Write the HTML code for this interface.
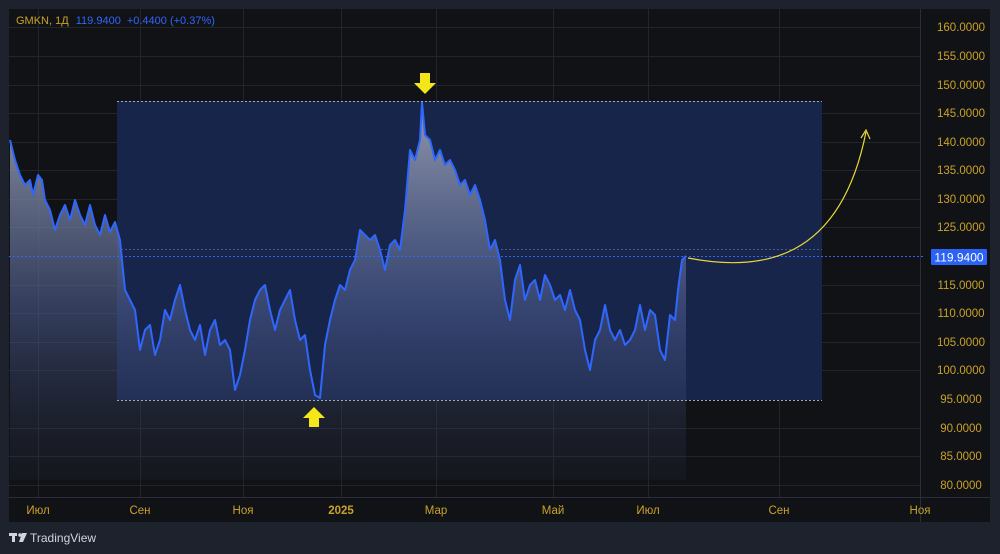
<!DOCTYPE html><html><head><meta charset="utf-8"><style>
body{margin:0;width:1000px;height:554px;background:#1e222d;overflow:hidden;font-family:"Liberation Sans",sans-serif}
</style></head><body>
<svg width="1000" height="554" style="position:absolute;left:0;top:0">
<defs>
<linearGradient id="g" x1="0" y1="0" x2="0" y2="1"><stop offset="0" stop-color="#a0a6b8" stop-opacity="0.9"/><stop offset="0.55" stop-color="#4a5a8a" stop-opacity="0.6"/><stop offset="1" stop-color="#2a3250" stop-opacity="0.15"/></linearGradient>
</defs>
<rect x="9" y="9" width="981" height="513" fill="#111215"/>
<g stroke="#22252c" stroke-width="1">
<line x1="9" x2="920" y1="27.5" y2="27.5"/><line x1="9" x2="920" y1="56.5" y2="56.5"/><line x1="9" x2="920" y1="85.5" y2="85.5"/><line x1="9" x2="920" y1="113.5" y2="113.5"/><line x1="9" x2="920" y1="142.5" y2="142.5"/><line x1="9" x2="920" y1="170.5" y2="170.5"/><line x1="9" x2="920" y1="199.5" y2="199.5"/><line x1="9" x2="920" y1="227.5" y2="227.5"/><line x1="9" x2="920" y1="285.5" y2="285.5"/><line x1="9" x2="920" y1="313.5" y2="313.5"/><line x1="9" x2="920" y1="342.5" y2="342.5"/><line x1="9" x2="920" y1="370.5" y2="370.5"/><line x1="9" x2="920" y1="428.5" y2="428.5"/><line x1="9" x2="920" y1="456.5" y2="456.5"/><line x1="9" x2="920" y1="485.5" y2="485.5"/>
<line y1="9" y2="497" x1="38.5" x2="38.5"/><line y1="9" y2="497" x1="140.5" x2="140.5"/><line y1="9" y2="497" x1="243.5" x2="243.5"/><line y1="9" y2="497" x1="341.5" x2="341.5"/><line y1="9" y2="497" x1="436.5" x2="436.5"/><line y1="9" y2="497" x1="553.5" x2="553.5"/><line y1="9" y2="497" x1="648.5" x2="648.5"/><line y1="9" y2="497" x1="779.5" x2="779.5"/>
</g>
<line x1="9" x2="990" y1="497.5" y2="497.5" stroke="#2a2e39"/>
<line x1="920.5" x2="920.5" y1="9" y2="522" stroke="#2a2e39"/>
<rect x="117" y="101" width="705" height="299" fill="#18254b"/>
<path fill="url(#g)" d="M10,140 L15,160 20,175 25,185 30,180 33,195 38,175 42,180 45,200 50,210 55,230 60,215 65,205 70,220 75,200 80,215 85,225 90,205 95,225 100,235 105,215 110,232 115,222 120,240 125,290 130,300 135,310 140,350 145,330 150,325 155,355 160,340 165,310 170,320 175,300 180,285 185,310 190,330 195,340 200,325 205,355 210,330 215,320 220,345 225,340 230,350 235,390 240,375 245,350 250,320 255,300 260,290 265,285 270,310 275,330 280,310 285,300 290,290 295,320 300,340 305,335 310,370 315,395 320,398 325,345 330,320 335,300 340,285 345,290 350,270 355,260 360,230 365,235 370,240 375,235 380,250 385,270 390,245 395,240 400,250 405,210 410,150 415,160 420,140 422,102 425,135 430,140 435,160 440,150 445,165 450,160 455,170 460,185 465,180 470,195 475,185 480,200 485,220 490,250 495,240 500,260 505,300 510,320 515,280 520,265 525,300 530,285 535,280 540,300 545,275 550,285 555,300 560,295 565,310 570,290 575,310 580,320 585,350 590,370 595,340 600,330 605,305 610,330 615,340 620,330 625,345 630,340 635,330 640,305 645,330 650,310 655,315 660,350 665,360 670,315 675,320 678,290 682,260 686,256 L686,480 L10,480 Z"/>
<path fill="none" stroke="#2f66ff" stroke-width="2" stroke-linejoin="round" d="M10,140 L15,160 20,175 25,185 30,180 33,195 38,175 42,180 45,200 50,210 55,230 60,215 65,205 70,220 75,200 80,215 85,225 90,205 95,225 100,235 105,215 110,232 115,222 120,240 125,290 130,300 135,310 140,350 145,330 150,325 155,355 160,340 165,310 170,320 175,300 180,285 185,310 190,330 195,340 200,325 205,355 210,330 215,320 220,345 225,340 230,350 235,390 240,375 245,350 250,320 255,300 260,290 265,285 270,310 275,330 280,310 285,300 290,290 295,320 300,340 305,335 310,370 315,395 320,398 325,345 330,320 335,300 340,285 345,290 350,270 355,260 360,230 365,235 370,240 375,235 380,250 385,270 390,245 395,240 400,250 405,210 410,150 415,160 420,140 422,102 425,135 430,140 435,160 440,150 445,165 450,160 455,170 460,185 465,180 470,195 475,185 480,200 485,220 490,250 495,240 500,260 505,300 510,320 515,280 520,265 525,300 530,285 535,280 540,300 545,275 550,285 555,300 560,295 565,310 570,290 575,310 580,320 585,350 590,370 595,340 600,330 605,305 610,330 615,340 620,330 625,345 630,340 635,330 640,305 645,330 650,310 655,315 660,350 665,360 670,315 675,320 678,290 682,260 686,256"/>
<g stroke="#a0a8bc" stroke-width="1" stroke-dasharray="2,2"><line x1="117" x2="822" y1="101.5" y2="101.5"/><line x1="117" x2="822" y1="400.5" y2="400.5"/><line x1="117" x2="822" y1="249.5" y2="249.5" stroke="#4a5a90"/></g>
<line x1="9" x2="925" y1="256.5" y2="256.5" stroke="#2f66ff" stroke-dasharray="2,2"/>
<path d="M688,258 C760,272 840,262 866,132" fill="none" stroke="#e8d83a" stroke-width="1.2"/>
<path d="M861,138 L866,130 L870,139" fill="none" stroke="#e8d83a" stroke-width="1.2"/>
<path d="M420,73 h10 v10 h6 l-11,11 l-11,-11 h6z" fill="#f5e617"/>
<path d="M309,427 h10 v-9 h6 l-11,-11 l-11,11 h6z" fill="#f5e617"/>
<rect x="931" y="249" width="56" height="16" fill="#2962ff" rx="1"/>
<text x="959" y="261.5" text-anchor="middle" fill="#fff" font-size="12">119.9400</text>
<g fill="#c9a227" font-size="11.5" text-anchor="middle">
<text x="961" y="31">160.0000</text><text x="961" y="60">155.0000</text><text x="961" y="89">150.0000</text><text x="961" y="117">145.0000</text><text x="961" y="146">140.0000</text><text x="961" y="174">135.0000</text><text x="961" y="203">130.0000</text><text x="961" y="231">125.0000</text><text x="961" y="289">115.0000</text><text x="961" y="317">110.0000</text><text x="961" y="346">105.0000</text><text x="961" y="374">100.0000</text><text x="961" y="403">95.0000</text><text x="961" y="432">90.0000</text><text x="961" y="460">85.0000</text><text x="961" y="489">80.0000</text>
<text x="38" y="514">Июл</text><text x="140" y="514">Сен</text><text x="243" y="514">Ноя</text><text x="341" y="514" font-weight="bold">2025</text><text x="436" y="514">Мар</text><text x="553" y="514">Май</text><text x="648" y="514">Июл</text><text x="779" y="514">Сен</text><text x="920" y="514">Ноя</text>
</g>
<text x="16" y="24" font-size="11" fill="#c9a227">GMKN, 1Д <tspan fill="#2f66ff" dx="4">119.9400</tspan><tspan fill="#2f66ff" dx="6">+0.4400 (+0.37%)</tspan></text>
<g fill="#d1d4dc"><rect x="9" y="533" width="8" height="3"/><rect x="12" y="533" width="3" height="9"/><circle cx="20" cy="535" r="1.8"/><path d="M22,533 h5 l-4,9 h-4z"/></g>
<text x="30" y="542" font-size="12" fill="#d1d4dc">TradingView</text>
</svg>
</body></html>
